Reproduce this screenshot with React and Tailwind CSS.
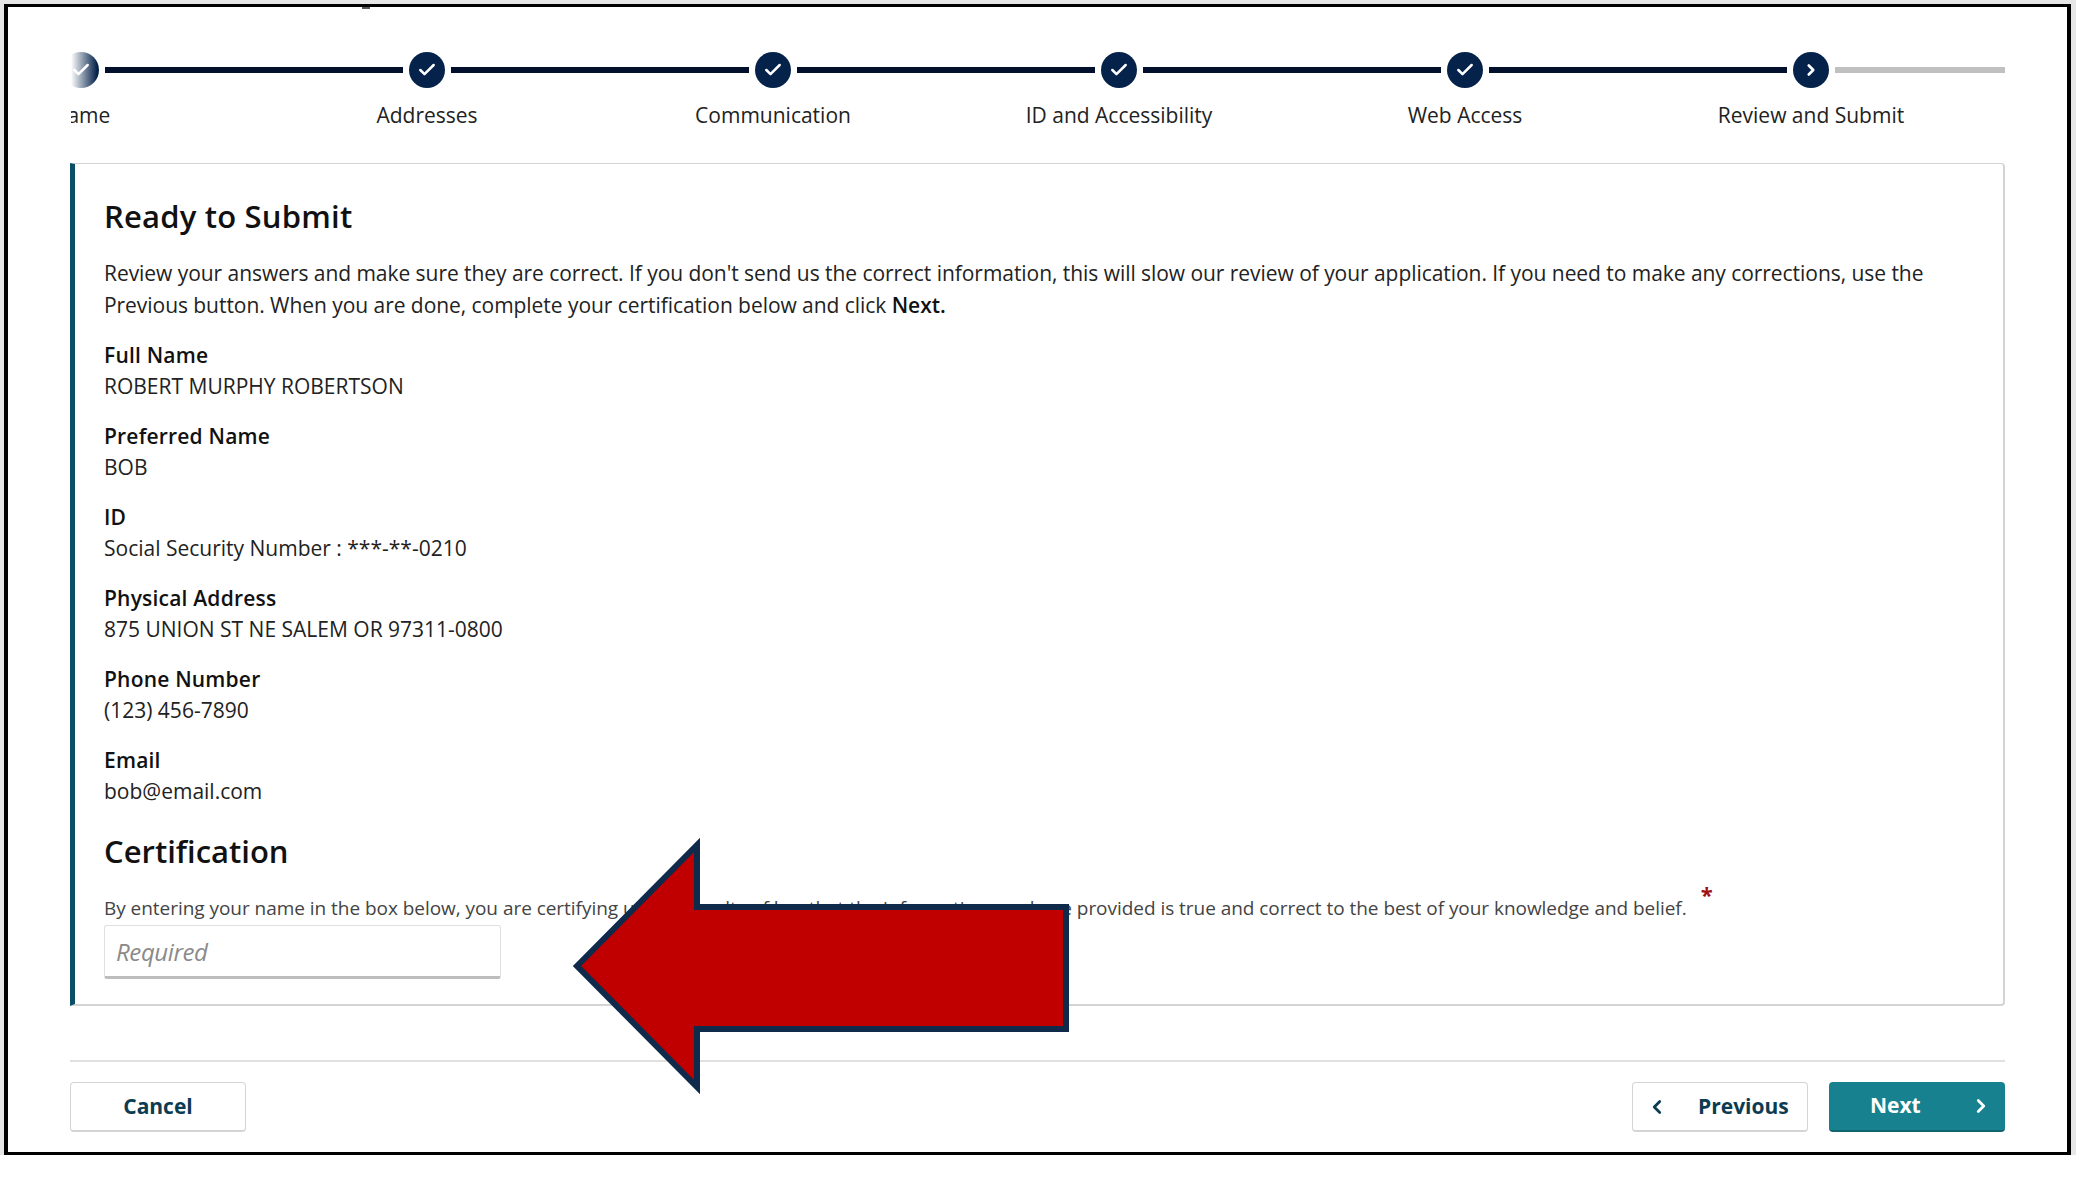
import React from "react";
import { Check, ChevronRight, ChevronLeft } from "lucide-react";

const font = { fontFamily: '"Open Sans", "Noto Sans", sans-serif' };

const steps = ["Name", "Addresses", "Communication", "ID and Accessibility", "Web Access", "Review and Submit"];

const fields = [
  ["Full Name", "ROBERT MURPHY ROBERTSON"],
  ["Preferred Name", "BOB"],
  ["ID", "Social Security Number : ***-**-0210"],
  ["Physical Address", "875 UNION ST NE SALEM OR 97311-0800"],
  ["Phone Number", "(123) 456-7890"],
  ["Email", "bob@email.com"],
];

const Stepper = () => (
  <div className="relative ml-[63px] w-[1934px] overflow-hidden h-[95px]">
    <div className="flex items-center -ml-[8px] h-[36px]">
      {steps.map((s, i) => (
        <div key={s} className={i === 5 ? "flex items-center flex-1" : "flex items-center"}>
          <div className="w-[36px] h-[36px] rounded-full bg-[#04224a] flex items-center justify-center shrink-0">
            {i === 5 ? (
              <ChevronRight size={18} strokeWidth={3.5} className="text-white" />
            ) : (
              <Check size={20} strokeWidth={3} className="text-white" />
            )}
          </div>
          <div
            className={
              i === 5
                ? "h-[6px] w-[171px] ml-[6px] bg-[#c0c0c0]"
                : "h-[6px] w-[298px] mx-[6px] bg-[#02102e]"
            }
          />
        </div>
      ))}
    </div>
    <div className="flex -ml-[163px] mt-[13px]">
      {steps.map((s) => (
        <div key={s} className="w-[346px] shrink-0 text-center text-[21px] leading-[28px] text-[#222]">
          {s}
        </div>
      ))}
    </div>
    <div className="absolute left-0 top-0 w-[26px] h-[36px] bg-gradient-to-r from-white to-transparent" />
  </div>
);

const Field = ({ label, value }) => (
  <div className="mb-[20px]">
    <div className="text-[21px] leading-[31px] font-semibold tracking-[0.2px] text-[#111]">{label}</div>
    <div className="text-[21px] leading-[30px] text-[#222]">{value}</div>
  </div>
);

const Arrow = () => (
  <svg className="absolute left-[570px] top-[834px]" width="502" height="264" viewBox="570 834 502 264">
    <polygon
      points="577,966 697,845 697,907 1066,907 1066,1029 697,1029 697,1087"
      fill="#c00000"
      stroke="#0f2a4a"
      strokeWidth="6"
      strokeLinejoin="miter"
    />
  </svg>
);

export default function App() {
  return (
    <div className="relative w-[2095px] h-[1183px] bg-white overflow-hidden" style={font}>
      <div className="w-[2076px] h-[1155px] bg-[#e6e6e6] pt-[4px] pl-[4px]">
        <div className="w-[2067px] h-[1151px] bg-white border-x-[4px] border-y-[3px] border-black pt-[45px]">
          <Stepper />
          <div className="ml-[62px] w-[1935px] h-[843px] mt-[16px] bg-white border border-[#d4d4d4] border-b-2 border-r-2 border-l-[5px] border-l-[#0b4f66] rounded-r-[4px] pl-[29px] pt-[30px]">
            <h1 className="text-[31px] leading-[44px] font-semibold tracking-[0.2px] text-[#111]">Ready to Submit</h1>
            <p className="mt-[19px] text-[21px] leading-[32px] tracking-[-0.05px] text-[#222] w-[1830px]">
              Review your answers and make sure they are correct. If you don't send us the correct information, this will slow our review of your application. If you need to make any corrections, use the Previous button. When you are done, complete your certification below and click <b className="font-semibold text-[#111]">Next.</b>
            </p>
            <div className="mt-[19px]">
              {fields.map(([l, v]) => (
                <Field key={l} label={l} value={v} />
              ))}
            </div>
            <h2 className="mt-[23px] text-[31px] leading-[44px] font-semibold text-[#111]">Certification</h2>
            <div className="mt-[21px] flex items-start">
              <p className="text-[19px] leading-[28px] tracking-[-0.04px] text-[#444]">
                By entering your name in the box below, you are certifying under penalty of law that the information you have provided is true and correct to the best of your knowledge and belief.
              </p>
              <span className="ml-[14px] -mt-[14px] text-[22px] leading-[28px] font-bold text-[#a01010]">*</span>
            </div>
            <input
              readOnly
              placeholder="Required"
              className="block mt-[3px] w-[397px] h-[54px] px-[11px] border border-[#e0e0e0] border-b-[3px] border-b-[#bdbdbd] rounded-[3px] text-[24px] italic tracking-[-0.4px] placeholder:text-[#8a8a8a] outline-none"
            />
          </div>
          <div className="ml-[62px] w-[1935px] mt-[54px] border-t-2 border-[#e0e0e0] pt-[20px] flex items-center">
            <button className="w-[176px] h-[50px] border border-[#d4d4d4] border-b-2 rounded-[4px] bg-white text-[21px] font-bold text-[#0b3c52]">
              Cancel
            </button>
            <button className="ml-auto w-[176px] h-[50px] border border-[#d4d4d4] border-b-2 rounded-[4px] bg-white text-[21px] font-bold text-[#0b3c52] flex items-center pl-[13px]">
              <ChevronLeft size={22} strokeWidth={3} />
              <span className="ml-[30px]">Previous</span>
            </button>
            <button className="ml-[21px] w-[176px] h-[50px] rounded-[4px] bg-[#17818f] border-b-2 border-[#0f6470] text-[21px] font-bold text-white flex items-center pl-[41px]">
              <span>Next</span>
              <ChevronRight size={22} strokeWidth={3} className="ml-[49px]" />
            </button>
          </div>
        </div>
      </div>
      <div className="absolute left-[362px] top-[7px] w-[8px] h-[2px] bg-[#555]" />
      <Arrow />
    </div>
  );
}
